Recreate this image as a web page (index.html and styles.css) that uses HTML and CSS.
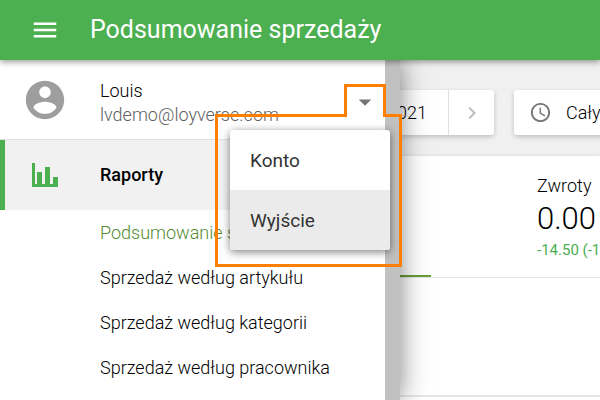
FILE: index.html
```html
<!DOCTYPE html>
<html lang="pl">
<head>
  <meta charset="UTF-8">
  <meta name="viewport" content="width=device-width, initial-scale=1">
  <title>Podsumowanie sprzedaży</title>
  <link rel="stylesheet" href="styles.css">
</head>
<body>
  <header class="topbar">
    <button class="icon-btn" type="button" aria-label="Menu">
      <svg width="30" height="30" viewBox="0 0 24 24" fill="currentColor">
        <path d="M3 18h18v-2H3v2zm0-5h18v-2H3v2zm0-7v2h18V6H3z"/>
      </svg>
    </button>
    <h1 class="topbar-title">Podsumowanie sprzedaży</h1>
  </header>

  <div class="page">
    <main class="content">
      <div class="filters">
        <div class="date-range">
          <button class="date-value" type="button">2021</button>
          <button class="date-next" type="button" aria-label="Następny">
            <svg width="24" height="24" viewBox="0 0 24 24" fill="currentColor">
              <path d="M10 6L8.590 7.410 13.170 12l-4.580 4.590L10 18l6-6z"/>
            </svg>
          </button>
        </div>
        <button class="time-filter" type="button">
          <svg width="23" height="23" viewBox="0 0 24 24" fill="currentColor">
            <path d="M12 2C6.480 2 2 6.480 2 12s4.480 10 10 10 10-4.480 10-10S17.520 2 12 2zm0 18c-4.420 0-8-3.580-8-8s3.580-8 8-8 8 3.580 8 8-3.580 8-8 8zm.5-13H11v6l5.250 3.150.75-1.230-4.500-2.670z"/>
          </svg>
          <span>Cały</span>
        </button>
      </div>

      <section class="report">
        <div class="tabs">
          <button class="tab active" type="button" aria-label="Sprzedaż"></button>
          <button class="tab" type="button">
            <span class="tab-name">Zwroty</span>
            <span class="tab-value">0.00</span>
            <span class="tab-diff">-14.50 (-1</span>
          </button>
        </div>
        <div class="chart-head"></div>
      </section>
    </main>

    <aside class="drawer">
      <div class="drawer-body">
        <div class="user">
          <svg class="avatar" width="46" height="46" viewBox="0 0 24 24" fill="currentColor">
            <path d="M12 2C6.480 2 2 6.480 2 12s4.480 10 10 10 10-4.480 10-10S17.520 2 12 2zm0 3c1.660 0 3 1.340 3 3s-1.340 3-3 3-3-1.340-3-3 1.340-3 3-3zm0 14.200c-2.500 0-4.710-1.280-6-3.220.03-1.990 4-3.080 6-3.080 1.990 0 5.970 1.090 6 3.080-1.290 1.940-3.500 3.220-6 3.220z"/>
          </svg>
          <div class="user-info">
            <div>Louis</div>
            <div class="user-mail">lvdemo@loyverse.com</div>
          </div>
          <button class="user-toggle" type="button" aria-label="Konto">
            <svg width="30" height="30" viewBox="0 0 24 24" fill="currentColor">
              <path d="M7 10l5 5 5-5z"/>
            </svg>
          </button>
        </div>
        <nav>
          <a class="nav-section" href="#">
            <svg width="26" height="24" viewBox="0 0 26 24" fill="currentColor">
              <path d="M0 0h3v21h2V9h5v12h3V4h5v17h3v-7h5v10H0z"/>
            </svg>
            Raporty
          </a>
          <ul class="nav-list">
            <li><a class="current" href="#">Podsumowanie sprzedaży</a></li>
            <li><a href="#">Sprzedaż według artykułu</a></li>
            <li><a href="#">Sprzedaż według kategorii</a></li>
            <li><a href="#">Sprzedaż według pracownika</a></li>
          </ul>
        </nav>
      </div>
      <div class="scrollbar"></div>

      <!-- account menu with the highlight around it -->
      <div class="account-menu">
        <button type="button">Konto</button>
        <button class="hover" type="button">Wyjście</button>
      </div>
      <svg class="highlight" width="187" height="183" viewBox="0 0 187 183" fill="none">
        <path d="M1.500 31.500H130.500V1.500H169.500V31.500H185.500V181.500H1.500z"/>
      </svg>
    </aside>
  </div>
</body>
</html>
```
FILE: styles.css
```css
* {
  box-sizing: border-box;
}
body {
  margin: 0;
  min-height: 100vh;
  display: flex;
  flex-direction: column;
  overflow: hidden;
  font-family: Roboto, "Liberation Sans", sans-serif;
  font-size: 18px;
  font-weight: 300;
  line-height: 24px;
  color: #000;
  background: #f0f0f0;
}
button {
  border: none;
  padding: 0;
  background: none;
  font: inherit;
  color: inherit;
  text-align: left;
  cursor: pointer;
}
a {
  color: inherit;
  text-decoration: none;
}
svg {
  display: block;
  flex: none;
}

/* top bar */
.topbar {
  display: flex;
  align-items: center;
  gap: 30px;
  height: 60px;
  padding: 0 30px;
  background: #4caf50;
  color: #fff;
  box-shadow: 0 2px 6px rgba(0, 0, 0, 0.4);
  position: relative;
  z-index: 2;
}
.topbar-title {
  margin: 0;
  font-size: 25px;
  font-weight: 400;
  line-height: 32px;
  white-space: nowrap;
}

.page {
  flex: 1;
  display: flex;
  position: relative;
}

/* report */
.content {
  flex: 1;
  min-width: 0;
  display: flex;
  flex-direction: column;
  padding-top: 30px;
  overflow: hidden;
}
.filters {
  display: flex;
  gap: 20px;
  padding-left: 30px;
  margin-bottom: 21px;
}
.date-range,
.time-filter {
  display: flex;
  align-items: center;
  flex: none;
  height: 45px;
  background: #fff;
  border-radius: 3px;
  box-shadow: 0 2px 5px rgba(0, 0, 0, 0.2);
}
.date-range {
  width: 464px;
}
.date-value {
  flex: 1;
  padding-right: 21px;
  text-align: right;
}
.date-next {
  display: flex;
  align-items: center;
  justify-content: center;
  width: 46px;
  height: 45px;
  border-left: 1px solid #e0e0e0;
  color: #bdbdbd;
}
.time-filter {
  gap: 14px;
  width: 200px;
  padding-left: 15px;
}
.time-filter svg {
  color: #757575;
}
.report {
  flex: 1;
  background: #fff;
  box-shadow: 0 1px 4px rgba(0, 0, 0, 0.2);
}
.tabs {
  display: flex;
  height: 122px;
  border-bottom: 1px solid #e6e6e6;
}
.tab {
  flex: none;
  display: flex;
  flex-direction: column;
  width: 431px;
  padding: 18px 0 0 106px;
  white-space: nowrap;
}
.tab.active {
  border-bottom: 2px solid #689f38;
}
.tab-value {
  font-size: 31px;
  line-height: 42px;
}
.tab-diff {
  font-size: 15px;
  font-weight: 400;
  line-height: 20px;
  color: #4caf50;
}
.chart-head {
  height: 119px;
  border-bottom: 2px solid #e6e6e6;
}

/* side drawer */
.drawer {
  position: absolute;
  top: 0;
  bottom: 0;
  left: 0;
  display: flex;
  width: 400px;
  background: #fff;
  box-shadow: 0 0 25px rgba(0, 0, 0, 0.5);
}
.drawer-body {
  flex: 1;
}
.scrollbar {
  width: 15px;
  background: #c1c1c1;
}
.user {
  display: flex;
  align-items: center;
  height: 80px;
  padding: 0 5px 0 22px;
  border-bottom: 1px solid #e0e0e0;
}
.avatar {
  color: #9e9e9e;
}
.user-info {
  flex: 1;
  padding: 6px 0 0 32px;
}
.user-mail {
  color: #616161;
}
.user-toggle {
  padding-top: 4px;
  color: #757575;
}
.nav-section {
  display: flex;
  align-items: center;
  gap: 42px;
  height: 70px;
  padding-left: 27px;
  border-left: 5px solid #4caf50;
  background: #f1f1f1;
  font-weight: 500;
}
.nav-section svg {
  color: #4caf50;
}
.nav-list {
  margin: 0;
  padding: 0;
  list-style: none;
}
.nav-list a {
  display: block;
  padding-left: 100px;
  line-height: 45px;
}
.nav-list .current {
  color: #558b2f;
}

/* account menu */
.account-menu {
  position: absolute;
  top: 70px;
  right: 10px;
  display: flex;
  flex-direction: column;
  width: 160px;
  border-radius: 3px;
  background: #fff;
  box-shadow: 0 2px 8px rgba(0, 0, 0, 0.5);
  overflow: hidden;
}
.account-menu button {
  height: 60px;
  padding: 2px 20px 0;
  font-size: 19px;
  font-weight: 400;
  color: #333;
}
.account-menu .hover {
  background: #ebebeb;
}
.highlight {
  position: absolute;
  top: 24px;
  left: 215px;
}
.highlight path {
  stroke: #ff8000;
  stroke-width: 3;
}
```
